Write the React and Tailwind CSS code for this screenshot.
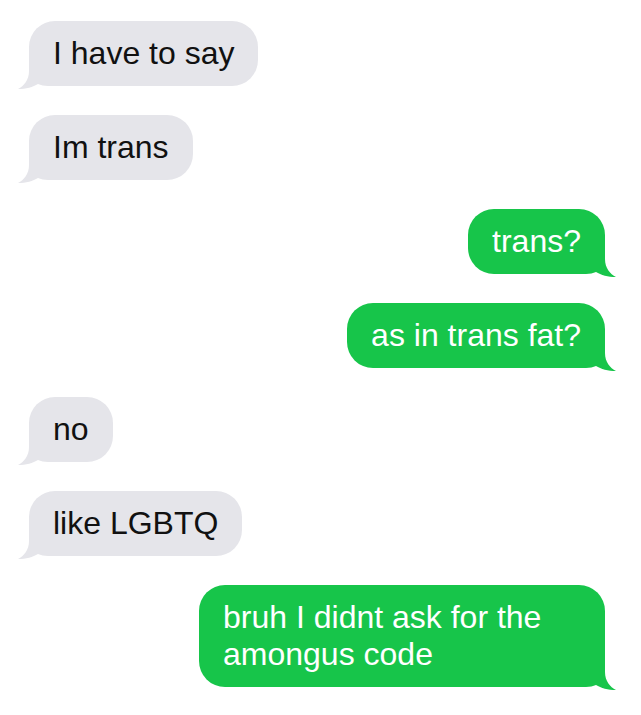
const messages = [
	{ from: "them", text: "I have to say" },
	{ from: "them", text: "Im trans" },
	{ from: "me", text: "trans?" },
	{ from: "me", text: "as in trans fat?" },
	{ from: "them", text: "no" },
	{ from: "them", text: "like LGBTQ" },
	{ from: "me", text: "bruh I didnt ask for the amongus code" },
]

const Tail = ({ mine }) => (
	<svg
		width="40"
		height="30"
		viewBox="0 0 40 30"
		className={
			mine
				? "absolute -right-[11px] -bottom-[3px] -scale-x-100"
				: "absolute -left-[11px] -bottom-[3px]"
		}
	>
		<path
			d="M11 0 L11 12 C11 21 6 27 0 30 C8 30 15 28 20 25 C23 26 26 27 30 27 L40 27 L40 0 Z"
			fill={mine ? "#17c54a" : "#e5e5ea"}
		/>
	</svg>
)

const Bubble = ({ from, text }) => {
	const mine = from === "me"
	return (
		<div className={mine ? "flex justify-end" : "flex justify-start"}>
			<div
				className={
					mine
						? "relative max-w-[406px] rounded-[26px] bg-[#17c54a] px-6 py-[14px] text-white"
						: "relative rounded-[26px] bg-[#e5e5ea] px-6 py-[14px] text-[#111]"
				}
			>
				<Tail mine={mine} />
				<p className="relative text-[32px] leading-[37px]">{text}</p>
			</div>
		</div>
	)
}

export default function App() {
	return (
		<div
			className="h-[715px] w-[641px] bg-white pl-[29px] pr-[36px] pt-[21px] flex flex-col gap-[29px]"
			style={{ fontFamily: '"Liberation Sans", Arial, sans-serif' }}
		>
			{messages.map((m, i) => (
				<Bubble key={i} from={m.from} text={m.text} />
			))}
		</div>
	)
}
